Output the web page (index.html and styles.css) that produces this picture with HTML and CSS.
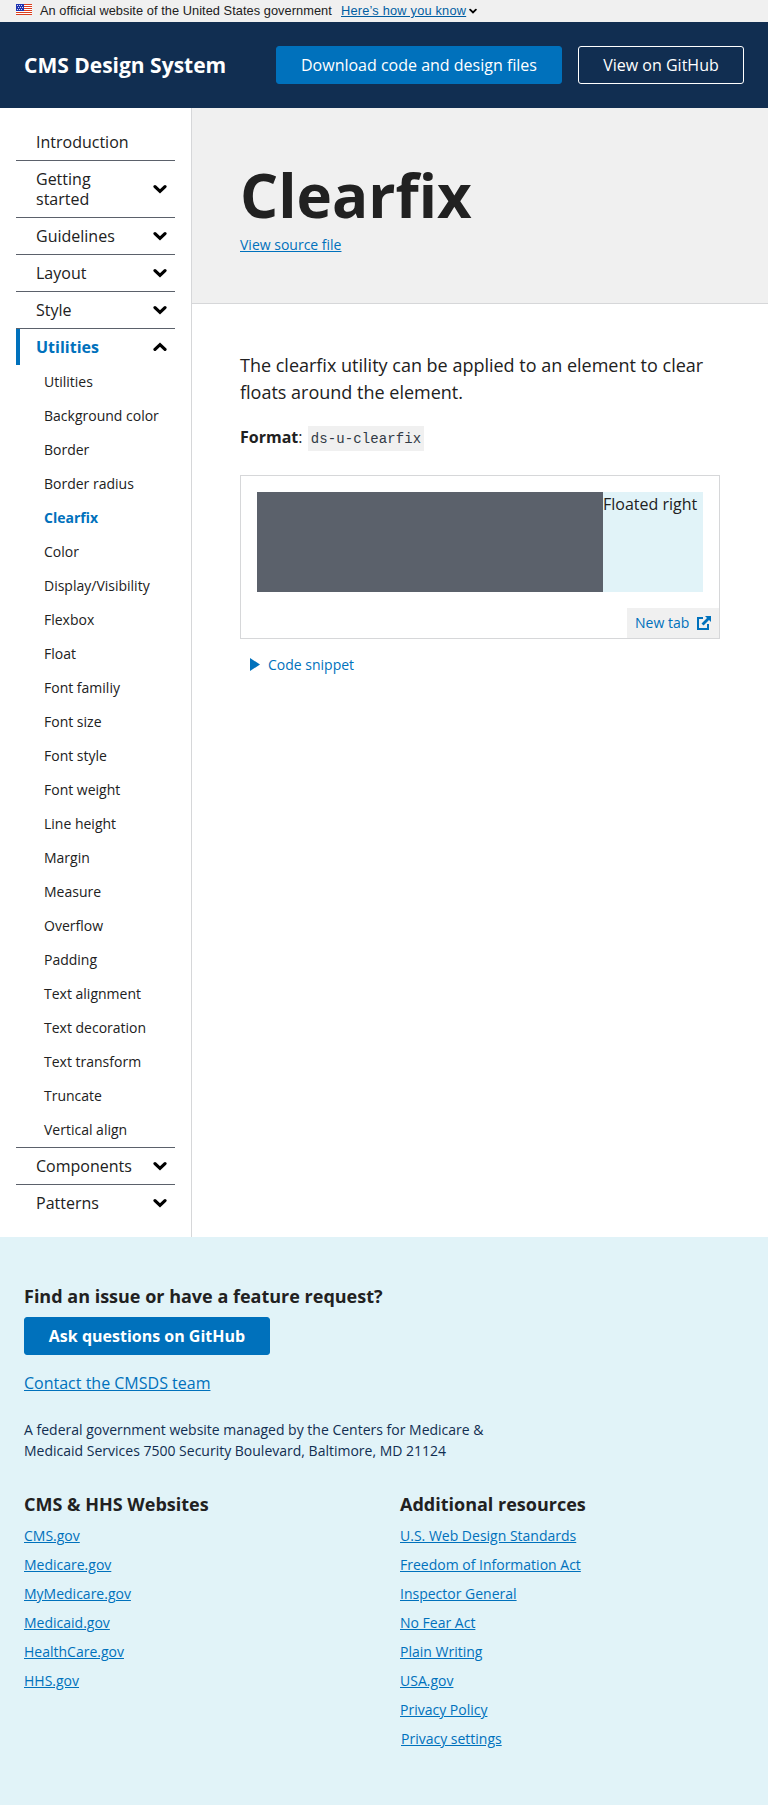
FILE: index.html
```html
<!DOCTYPE html>
<html lang="en">
<head>
<meta charset="utf-8">
<title>Clearfix - CMS Design System</title>
<link rel="stylesheet" href="styles.css">
</head>
<body>
<svg width="0" height="0" class="defs" aria-hidden="true">
  <symbol id="chev" viewBox="0 0 14 14"><path d="M2 4.6L7 9.4l5-4.8" fill="none" stroke="#000" stroke-width="3.2" stroke-linecap="round"/></symbol>
</svg>
<div class="banner">
  <svg class="flag" width="16" height="11" viewBox="0 0 16 11" shape-rendering="crispEdges">
    <path fill="#fff" d="M0 0h16v11H0z"/>
    <path fill="#db3e1f" d="M8 0h8v1H8zM8 2h8v1H8zM8 4h8v1H8zM8 6h8v1H8zM0 8h16v1H0zM0 10h16v1H0z"/>
    <path fill="#1e33b1" d="M0 0h8v7H0z"/>
    <path fill="#fff" d="M1 1h1v1H1zM3 1h1v1H3zM5 1h1v1H5zM2 3h1v1H2zM4 3h1v1H4zM6 3h1v1H6zM1 5h1v1H1zM3 5h1v1H3zM5 5h1v1H5z" opacity=".8"/>
  </svg>
  <span class="banner-text">An official website of the United States government</span>
  <a class="banner-link" href="#">Here’s how you know</a>
  <svg class="banner-chev" width="8" height="8"><use href="#chev"/></svg>
</div>
<header class="header">
  <span class="brand">CMS Design System</span>
  <a class="btn btn-primary" href="#">Download code and design files</a>
  <a class="btn btn-outline" href="#">View on GitHub</a>
</header>
<div class="layout">
  <nav class="nav">
    <a class="item">Introduction</a>
    <a class="item"><span>Getting started</span><svg class="chev"><use href="#chev"/></svg></a>
    <a class="item"><span>Guidelines</span><svg class="chev"><use href="#chev"/></svg></a>
    <a class="item"><span>Layout</span><svg class="chev"><use href="#chev"/></svg></a>
    <a class="item"><span>Style</span><svg class="chev"><use href="#chev"/></svg></a>
    <a class="item open"><span>Utilities</span><svg class="chev up"><use href="#chev"/></svg></a>
    <ul class="sub">
      <li>Utilities</li><li>Background color</li><li>Border</li><li>Border radius</li><li class="current">Clearfix</li><li>Color</li><li>Display/Visibility</li><li>Flexbox</li><li>Float</li><li>Font familiy</li><li>Font size</li><li>Font style</li><li>Font weight</li><li>Line height</li><li>Margin</li><li>Measure</li><li>Overflow</li><li>Padding</li><li>Text alignment</li><li>Text decoration</li><li>Text transform</li><li>Truncate</li><li>Vertical align</li>
    </ul>
    <a class="item"><span>Components</span><svg class="chev"><use href="#chev"/></svg></a>
    <a class="item"><span>Patterns</span><svg class="chev"><use href="#chev"/></svg></a>
  </nav>
  <main class="main">
    <div class="page-head">
      <h1>Clearfix</h1>
      <a class="link small" href="#">View source file</a>
    </div>
    <div class="content">
      <p class="lead">The clearfix utility can be applied to an element to clear floats around the element.</p>
      <p class="format"><b>Format</b>: <code>ds-u-clearfix</code></p>
      <div class="example">
        <div class="demo"><div class="floated">Floated right</div></div>
        <a class="newtab">New tab
          <svg width="14" height="14" viewBox="0 0 14 14"><path d="M6 2H1v11h10V8" fill="none" stroke="#0071bc" stroke-width="2"/><path d="M8 0h6v6l-2-2-5.5 5.5-2-2L10 2z" fill="#0071bc"/></svg>
        </a>
      </div>
      <a class="snippet"><svg width="10" height="13"><path d="M0 0l10 6.5-10 6.5z" fill="#0071bc"/></svg>Code snippet</a>
    </div>
  </main>
</div>
<footer class="footer">
  <h2>Find an issue or have a feature request?</h2>
  <a class="btn btn-primary btn-bold" href="#">Ask questions on GitHub</a>
  <p class="contact"><a class="link" href="#">Contact the CMSDS team</a></p>
  <p class="address">A federal government website managed by the Centers for Medicare &amp; Medicaid Services 7500 Security Boulevard, Baltimore, MD 21124</p>
  <div class="cols">
    <div>
      <h2>CMS &amp; HHS Websites</h2>
      <ul class="links">
        <li><a class="link" href="#">CMS.gov</a></li><li><a class="link" href="#">Medicare.gov</a></li><li><a class="link" href="#">MyMedicare.gov</a></li><li><a class="link" href="#">Medicaid.gov</a></li><li><a class="link" href="#">HealthCare.gov</a></li><li><a class="link" href="#">HHS.gov</a></li>
      </ul>
    </div>
    <div>
      <h2>Additional resources</h2>
      <ul class="links">
        <li><a class="link" href="#">U.S. Web Design Standards</a></li><li><a class="link" href="#">Freedom of Information Act</a></li><li><a class="link" href="#">Inspector General</a></li><li><a class="link" href="#">No Fear Act</a></li><li><a class="link" href="#">Plain Writing</a></li><li><a class="link" href="#">USA.gov</a></li><li><a class="link" href="#">Privacy Policy</a></li><li class="settings"><a class="link" href="#">Privacy settings</a></li>
      </ul>
    </div>
  </div>
</footer>
</body>
</html>
```
FILE: styles.css
```css
* { box-sizing: border-box; }
body { margin: 0; font: 16px/24px "Open Sans", sans-serif; color: #212121; background: #fff; }
h1, h2, p, ul { margin: 0; padding: 0; }
ul { list-style: none; }
a { text-decoration: none; }
.defs { position: absolute; }
.link { color: #0071bc; text-decoration: underline; }
.small { font-size: 14px; line-height: 21px; }

.banner { height: 22px; display: flex; align-items: flex-start; padding-left: 16px; background: #f0f0f0; font: 12.8px/22px "Liberation Sans", Arial, sans-serif; color: #212121; }
.flag { margin: 4px 8px 0 0; }
.banner-text { width: 301px; letter-spacing: .05px; white-space: nowrap; }
.banner-link { width: 126px; color: #005ea2; text-decoration: underline; letter-spacing: .2px; white-space: nowrap; }
.banner-chev { margin: 7px 0 0 2px; }

.header { height: 86px; display: flex; align-items: center; padding: 0 24px; background: #112e51; }
.brand { margin-right: auto; color: #fff; font-size: 21px; font-weight: 700; }
.btn { display: inline-flex; align-items: center; justify-content: center; height: 38px; border: 1px solid #0071bc; border-radius: 3px; color: #fff; white-space: nowrap; }
.btn-primary { width: 286px; background: #0071bc; }
.btn-outline { width: 166px; margin-left: 16px; border-color: #fff; }
.btn-bold { width: 246px; font-weight: 700; }

.layout { display: flex; }
.nav { width: 192px; padding: 16px; border-right: 1px solid #d6d7d9; }
.item { display: flex; align-items: center; justify-content: space-between; padding: 8px 8px 8px 20px; line-height: 20px; border-top: 1px solid #5b616b; }
.item span { max-width: 92px; }
.item:first-child { border-top: 0; }
.chev { width: 14px; height: 14px; }
.up { transform: rotate(180deg); }
.open { position: relative; color: #0071bc; font-weight: 700; }
.open::before { content: ""; position: absolute; left: 0; top: 0; bottom: 0; width: 4px; background: #0071bc; }
.sub li { height: 34px; padding-left: 28px; font-size: 14px; line-height: 34px; white-space: nowrap; }
.sub .current { color: #0071bc; font-weight: 700; }

.main { flex: 1; }
.page-head { height: 196px; padding: 48px; background: #f0f0f0; border-bottom: 1px solid #d6d7d9; }
h1 { font-size: 60px; line-height: 78px; }
.page-head .link { display: block; width: max-content; }
.content { padding: 48px; }
.lead { font-size: 18px; line-height: 27px; }
.format { height: 24px; margin: 19px 0 26px; }
code { padding: 5px 3px 4px; margin-left: 1px; background: #f0f0f0; color: #323a45; font: 14px "Liberation Mono", monospace; letter-spacing: .1px; }
.example { height: 164px; border: 1px solid #d6d7d9; display: flex; flex-direction: column; }
.demo { display: flex; justify-content: flex-end; margin: 16px; background: #5b616b; }
.floated { width: 100px; height: 100px; background: #e1f3f8; white-space: nowrap; }
.newtab { align-self: flex-end; width: 92px; height: 30px; display: flex; align-items: center; justify-content: space-between; padding: 0 8px; background: #f0f0f0; color: #0071bc; font-size: 14px; }
.snippet { display: flex; align-items: center; gap: 8px; margin: 15px 0 0 10px; color: #0071bc; font-size: 14px; line-height: 21px; }

.footer { height: 568px; padding: 48px 24px; background: #e1f3f8; }
.footer h2 { font-size: 18px; line-height: 22px; margin-bottom: 10px; }
.footer > .btn { display: flex; }
.contact { margin: 16px 0 24px; }
.address { width: 480px; font-size: 14px; line-height: 21px; color: #112e51; }
.cols { display: grid; grid-template-columns: 376px 1fr; margin-top: 32px; }
.links { display: grid; gap: 8px; font-size: 14px; line-height: 21px; }
.settings { padding-left: 1px; }
```
